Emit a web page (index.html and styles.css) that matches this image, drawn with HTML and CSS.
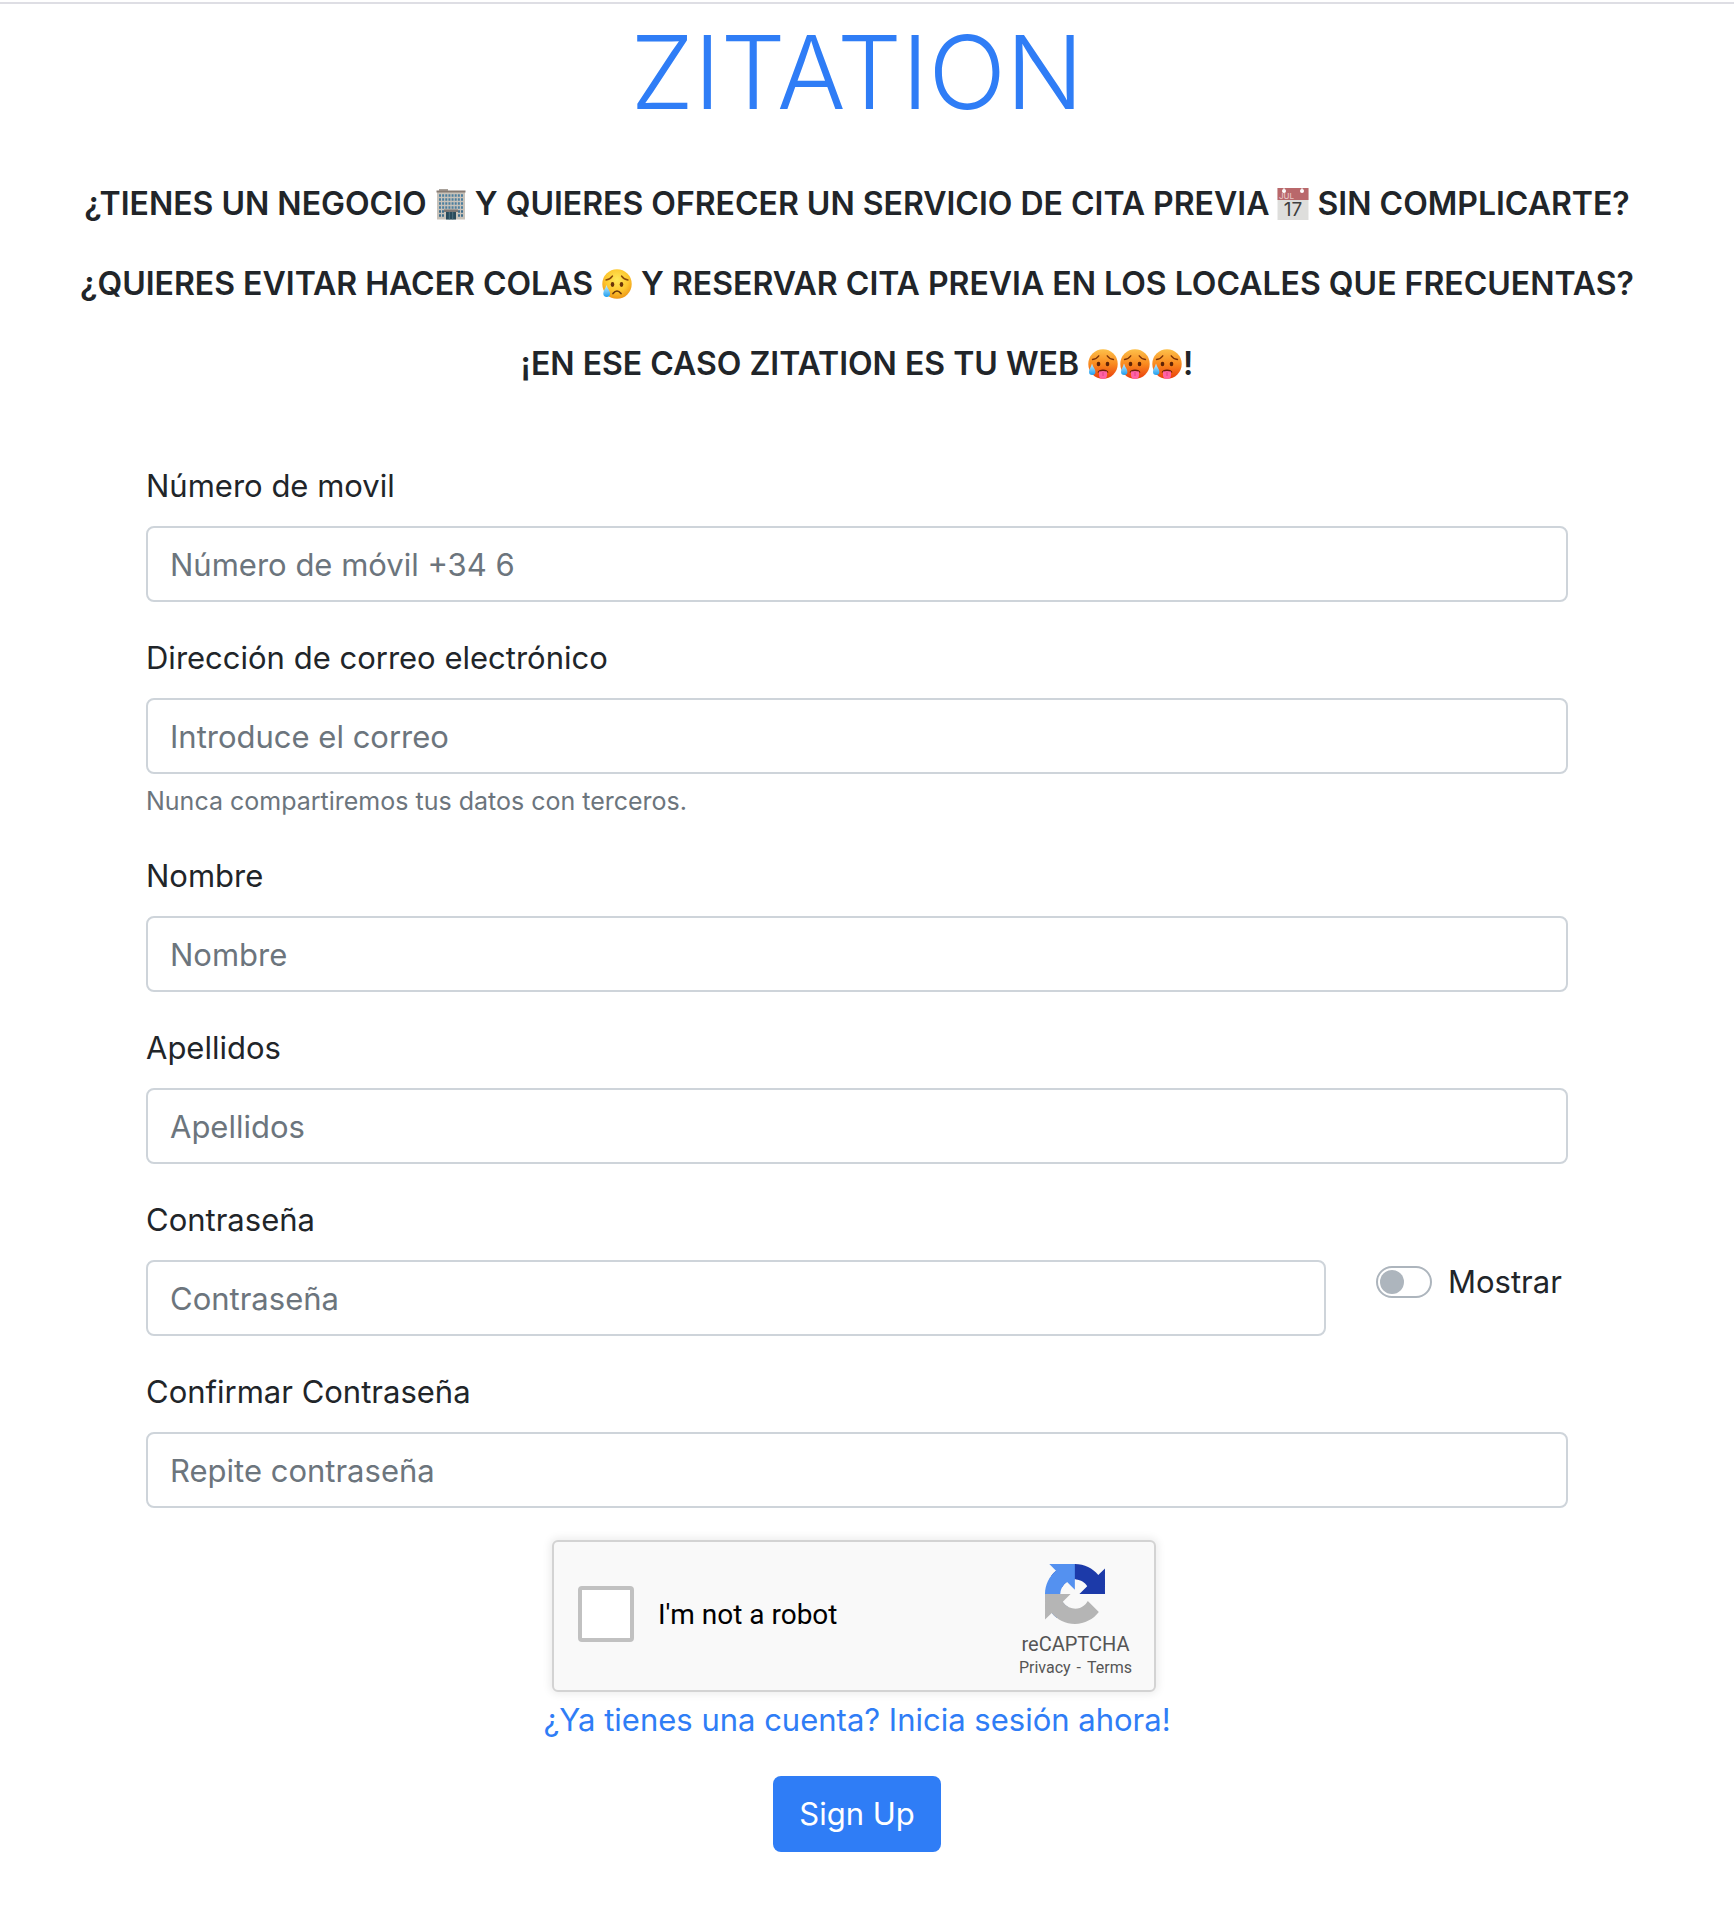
FILE: index.html
```html
<!DOCTYPE html>
<html lang="es">
<head>
<meta charset="utf-8">
<meta name="viewport" content="width=device-width, initial-scale=1">
<title>Zitation</title>
<link rel="stylesheet" href="styles.css">
</head>
<body>
<svg class="defs" width="0" height="0" aria-hidden="true">
  <defs>
    <radialGradient id="yellow" cx=".5" cy=".35" r=".65"><stop offset="0" stop-color="#ffe95a"/><stop offset=".6" stop-color="#fdc72f"/><stop offset="1" stop-color="#ee9616"/></radialGradient>
    <linearGradient id="orange" x1="0" y1="0" x2="0" y2="1"><stop offset="0" stop-color="#fdc04a"/><stop offset=".5" stop-color="#f98a1f"/><stop offset="1" stop-color="#ea3e0c"/></linearGradient>
    <linearGradient id="drop" x1="0" y1="0" x2="0" y2="1"><stop offset="0" stop-color="#c9efff"/><stop offset="1" stop-color="#1f9ff0"/></linearGradient>
    <symbol id="hot" viewBox="0 0 32 32">
      <circle cx="16" cy="16" r="14.7" fill="url(#orange)"/>
      <path d="M5.500 11.500Q9.500 11 11.800 7.800M20.200 7.800Q22.500 11 26.500 11.500" fill="none" stroke="#7b3208" stroke-width="1.300" stroke-linecap="round"/>
      <ellipse cx="11.500" cy="16" rx="1.800" ry="2.300" fill="#5f2306"/><ellipse cx="20.500" cy="16" rx="1.800" ry="2.300" fill="#5f2306"/>
      <path d="M10.500 24.500Q11.500 21.500 16 21.500T21.500 24.500Z" fill="#6b1d08"/>
      <path d="M12 23.500Q16 22.300 20 23.500V27Q20 31 16 31T12 27Z" fill="#ff62a5"/>
      <path d="M16 24V28" stroke="#d93a80" stroke-width=".8"/>
      <path d="M5 15.500C4 19 2 21 2 23.800A3.200 3.200 0 0 0 8.400 23.800C8.400 21 6 19 5 15.500Z" fill="url(#drop)"/>
    </symbol>
  </defs>
</svg>
<header class="topline"></header>
<main class="page">
  <h1 class="brand">ZITATION</h1>
  <section class="pitch">
    <p>¿TIENES UN NEGOCIO <svg class="emoji" viewBox="0 0 32 32" role="img" aria-label="edificio">
      <path d="M4 1H13V4H4Z" fill="#a9a29b"/><path d="M2 4H30V31.500H2Z" fill="#c9c3ba"/><path d="M1.500 2.500H30.500V4.500H1.500Z" fill="#877b73"/>
      <path d="M4 7.500H28M4 11.500H28M4 15.500H28M4 19.500H28" stroke="#4c7f9f" stroke-width="2.600" stroke-dasharray="2 1.140"/>
      <path d="M4 23.500H9M23 23.500H28M4 27.500H9M23 27.500H28" stroke="#416f8c" stroke-width="2.600" stroke-dasharray="2 1"/>
      <path d="M9 21.500H23V24H9Z" fill="#7d7774"/><path d="M11 24H21V31.500H11Z" fill="#294a5b"/><path d="M14.300 24V31.500M17.700 24V31.500" stroke="#5b7c8c" stroke-width=".8"/>
    </svg> Y QUIERES OFRECER UN SERVICIO DE CITA PREVIA <svg class="emoji" viewBox="0 0 32 32" role="img" aria-label="calendario, 17 de julio">
      <path d="M.500 0H31.500V32H.500Z" fill="#dededc"/><path d="M.500 0H31.500V12H.500Z" fill="#b9686b"/>
      <circle cx="7" cy="3" r="2" fill="#fff"/><circle cx="25" cy="3" r="2" fill="#fff"/><path d="M7 0V3M25 0V3" stroke="#f4eeee" stroke-width="1"/>
      <text class="cal-month" x="2" y="10.500">JUL</text><text class="cal-day" x="16" y="28">17</text>
    </svg> SIN COMPLICARTE?</p>
    <p>¿QUIERES EVITAR HACER COLAS <svg class="emoji" viewBox="0 0 32 32" role="img" aria-label="cara triste con sudor">
      <circle cx="16" cy="16" r="14.700" fill="url(#yellow)"/>
      <path d="M5 12Q9 11.500 11.500 8M20.500 8Q23 11.500 27 12" fill="none" stroke="#8a4a0b" stroke-width="1.400" stroke-linecap="round"/>
      <ellipse cx="11.500" cy="16.500" rx="1.800" ry="2.400" fill="#6b3509"/><ellipse cx="20.500" cy="16.500" rx="1.800" ry="2.400" fill="#6b3509"/>
      <path d="M12 25.500Q16 20.500 20 25.500" fill="none" stroke="#6b3509" stroke-width="1.700" stroke-linecap="round"/>
      <path d="M5.500 17C4.500 20.500 2.300 22.500 2.300 25.500A3.400 3.400 0 0 0 9.100 25.500C9.100 22.500 6.500 20.500 5.500 17Z" fill="url(#drop)"/>
    </svg> Y RESERVAR CITA PREVIA EN LOS LOCALES QUE FRECUENTAS?</p>
    <p>¡EN ESE CASO ZITATION ES TU WEB <svg class="emoji" role="img" aria-label="cara con calor"><use href="#hot"/></svg><svg class="emoji" role="img" aria-label="cara con calor"><use href="#hot"/></svg><svg class="emoji" role="img" aria-label="cara con calor"><use href="#hot"/></svg>!</p>
  </section>
  <form class="signup">
    <div class="group">
      <label for="phone">Número de movil</label>
      <input class="control" id="phone" type="tel" placeholder="Número de móvil +34 6">
    </div>
    <div class="group">
      <label for="email">Dirección de correo electrónico</label>
      <input class="control" id="email" type="email" placeholder="Introduce el correo" aria-describedby="email-help">
      <small class="help" id="email-help">Nunca compartiremos tus datos con terceros.</small>
    </div>
    <div class="group">
      <label for="name">Nombre</label>
      <input class="control" id="name" type="text" placeholder="Nombre">
    </div>
    <div class="group">
      <label for="surname">Apellidos</label>
      <input class="control" id="surname" type="text" placeholder="Apellidos">
    </div>
    <div class="group">
      <label for="password">Contraseña</label>
      <div class="password-row">
        <input class="control" id="password" type="password" placeholder="Contraseña">
        <div class="toggle">
          <input class="switch" id="show" type="checkbox" role="switch">
          <label for="show">Mostrar</label>
        </div>
      </div>
    </div>
    <div class="group">
      <label for="confirm">Confirmar Contraseña</label>
      <input class="control" id="confirm" type="password" placeholder="Repite contraseña">
    </div>
    <div class="actions">
      <div class="captcha">
        <input class="captcha-box" id="robot" type="checkbox">
        <label class="captcha-label" for="robot">I'm not a robot</label>
        <div class="captcha-brand">
          <svg class="captcha-logo" viewBox="0 0 64 64" aria-hidden="true">
            <path fill="#1c3aa9" d="M64 31.955l-.033-1.370V4.687l-7.160 7.160C50.948 4.674 42.033.093 32.050.093c-10.400 0-19.622 4.960-25.458 12.640l11.736 11.860a15.550 15.550 0 0 1 4.754-5.334c2.050-1.600 4.952-2.906 8.968-2.906.485 0 .860.057 1.135.163 4.976.393 9.288 3.140 11.828 7.124l-8.307 8.307L64 31.953"/>
            <path fill="#5491f0" d="M31.862.094l-1.370.033H4.594l7.160 7.160C4.580 13.147 0 22.060 0 32.046c0 10.400 4.960 19.622 12.640 25.458L24.500 45.768a15.550 15.550 0 0 1-5.334-4.754c-1.600-2.050-2.906-4.952-2.906-8.968 0-.485.057-.860.163-1.135.393-4.976 3.140-9.288 7.124-11.828l8.307 8.307L31.860.095"/>
            <path fill="#b5b5b5" d="M.001 32.045l.033 1.370v25.898l7.160-7.160c5.860 7.173 14.774 11.754 24.760 11.754 10.400 0 19.622-4.960 25.458-12.640l-11.736-11.860a15.550 15.550 0 0 1-4.754 5.334c-2.050 1.600-4.952 2.906-8.968 2.906-.485 0-.860-.057-1.135-.163-4.976-.393-9.288-3.140-11.828-7.124l8.307-8.307c-10.522.040-22.400.066-27.295-.005"/>
          </svg>
          <div class="captcha-name">reCAPTCHA</div>
          <div class="captcha-links"><a href="#privacy">Privacy</a><span>-</span><a href="#terms">Terms</a></div>
        </div>
      </div>
      <a class="login" href="#login">¿Ya tienes una cuenta? Inicia sesión ahora!</a>
      <button class="submit" type="submit">Sign Up</button>
    </div>
  </form>
</main>
</body>
</html>
```
FILE: styles.css
```css
*, *::before, *::after { box-sizing: border-box; }

body {
  margin: 0;
  background: #fff;
  color: #212529;
  font-family: Inter, "Liberation Sans", sans-serif;
  font-size: 31px;
  line-height: 48px;
}

.defs { display: block; }

.topline {
  height: 4px;
  border-bottom: 2px solid #dedee4;
}

.page { padding: 0 20px 56px 0; }

.brand {
  margin: 0 0 40px;
  color: #2f7df6;
  font-size: 102px;
  font-weight: 350;
  line-height: 136px;
  text-align: center;
}

.pitch {
  margin-bottom: 74px;
  font-size: 32px;
  font-weight: 600;
  text-align: center;
}

.pitch p { margin: 0 0 32px; }
.pitch p:last-child { margin-bottom: 0; }

.emoji {
  width: 32px;
  height: 32px;
  vertical-align: -5px;
}

.cal-month { font-size: 8px; font-weight: 500; fill: #e6c4c4; }
.cal-day { font-size: 19px; font-weight: 400; fill: #3f3f3f; text-anchor: middle; }

.signup { padding: 0 146px; }

.group { margin-bottom: 32px; }

.group > label {
  display: block;
  width: fit-content;
  margin-bottom: 16px;
}

.control {
  display: block;
  width: 100%;
  height: 76px;
  padding: 12px 22px;
  border: 2px solid #ced4da;
  border-radius: 8px;
  background: #fff;
  color: #495057;
  font: inherit;
}

.control::placeholder { color: #6c757d; opacity: 1; }

.help {
  display: block;
  margin-top: 8px;
  color: #6c757d;
  font-size: 25px;
  line-height: 38px;
}

.password-row {
  display: flex;
  align-items: flex-start;
  gap: 50px;
}

.password-row .control { flex: 1; }

.toggle {
  display: flex;
  align-items: center;
  gap: 16px;
  width: 192px;
  line-height: 44px;
}

.switch {
  flex: none;
  display: flex;
  align-items: center;
  width: 56px;
  height: 32px;
  margin: 0;
  padding: 2px;
  border: 2px solid #adb5bd;
  border-radius: 16px;
  background: #fff;
  appearance: none;
}

.switch::before {
  content: "";
  width: 24px;
  height: 24px;
  border-radius: 50%;
  background: #adb5bd;
}

.switch:checked { justify-content: flex-end; }

.actions {
  display: flex;
  flex-direction: column;
  align-items: center;
}

.captcha {
  display: flex;
  align-items: center;
  width: 604px;
  height: 152px;
  margin: 0 6px 4px 0;
  padding: 0 22px 0 24px;
  border: 2px solid #d3d3d3;
  border-radius: 6px;
  background: #f9f9f9;
  box-shadow: 0 0 8px 2px rgba(0, 0, 0, 0.08);
  color: #000;
  font-family: Roboto, sans-serif;
}

.captcha-box {
  width: 56px;
  height: 56px;
  margin: 0 24px 4px 0;
  border: 4px solid #c1c1c1;
  border-radius: 4px;
  background: #fff;
  appearance: none;
}

.captcha-label {
  flex: 1;
  margin-bottom: 2px;
  font-size: 28px;
  line-height: 34px;
}

.captcha-brand {
  display: flex;
  flex-direction: column;
  align-items: center;
  padding-top: 12px;
  color: #555;
}

.captcha-logo { width: 60px; height: 60px; margin-bottom: 8px; }
.captcha-name { font-size: 20px; line-height: 24px; }
.captcha-links { display: flex; gap: 6px; font-size: 16px; line-height: 24px; }
.captcha-links a { color: inherit; text-decoration: none; }

.login { color: #2f7df6; text-decoration: none; }

.submit {
  height: 76px;
  margin-top: 32px;
  padding: 0 26px;
  border: 0;
  border-radius: 8px;
  background: #2f7df6;
  color: #fff;
  font: inherit;
}
```
